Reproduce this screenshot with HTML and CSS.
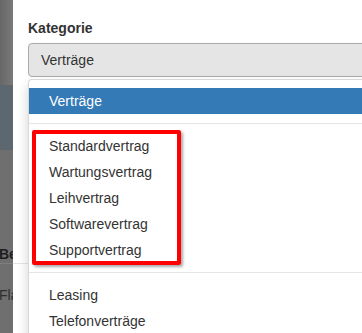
FILE: index.html
```html
<!DOCTYPE html>
<html lang="de">
<head>
    <meta charset="UTF-8">
    <meta name="viewport" content="width=device-width, initial-scale=1.0">
    <title>Kategorie</title>
    <link rel="stylesheet" href="styles.css">
</head>
<body>
    <div class="page">
        <!-- page behind the modal backdrop -->
        <div class="behind">
            <div class="behind-top"></div>
            <div class="behind-nav"></div>
            <div class="behind-body">
                <div class="behind-label">Be</div>
                <div class="behind-input">Fla</div>
            </div>
        </div>

        <div class="modal">
            <label class="field-label">Kategorie</label>
            <div class="select-wrap">
                <div class="select-box">Verträge</div>

                <ul class="dropdown-menu">
                    <li class="item active">Verträge</li>
                    <li class="divider"></li>
                    <li class="group">
                        <ul>
                            <li class="item">Standardvertrag</li>
                            <li class="item">Wartungsvertrag</li>
                            <li class="item">Leihvertrag</li>
                            <li class="item">Softwarevertrag</li>
                            <li class="item">Supportvertrag</li>
                        </ul>
                    </li>
                    <li class="divider"></li>
                    <li class="item">Leasing</li>
                    <li class="item">Telefonverträge</li>
                </ul>
            </div>
            <div class="field-sep"></div>
        </div>
    </div>
</body>
</html>
```

FILE: styles.css
```css
html, body {
    margin: 0;
    padding: 0;
    overflow: hidden;
}

body {
    font-family: "Liberation Sans", Arial, sans-serif;
    font-size: 14px;
    line-height: 20px;
    color: #333;
    width: 362px;
    height: 333px;
}

.page {
    display: flex;
    height: 333px;
}

.behind {
    width: 13px;
    flex-shrink: 0;
    overflow: hidden;
    display: flex;
    flex-direction: column;
}

.behind-top {
    height: 85px;
    background: linear-gradient(to right, #666, #7a7a7a);
}

.behind-nav {
    height: 65px;
    background-color: #5d6770;
}

.behind-body {
    flex: 1;
    background-color: #6f6f6f;
    white-space: nowrap;
}

.behind-label {
    margin-top: 95px;
    margin-left: -1px;
    line-height: 18px;
    font-weight: bold;
    color: #1e1e1e;
    border-bottom: 1px solid #7e7e7e;
}

.behind-input {
    margin-top: 21px;
    margin-left: -1px;
    color: #2e2e2e;
}

.modal {
    flex: 1;
    background-color: #fff;
    padding: 18px 0 0 15px;
    position: relative;
}

.field-label {
    display: block;
    font-weight: bold;
    margin-bottom: 5px;
}

.select-wrap {
    position: relative;
    width: 400px;
}

.select-box {
    height: 34px;
    box-sizing: border-box;
    padding: 6px 12px;
    background-color: #e5e5e5;
    border: 1px solid #aaa;
    border-radius: 4px 0 0 4px;
}

.field-sep {
    margin-top: 186px;
    margin-left: -15px;
    border-top: 1px solid #e5e5e5;
}

.dropdown-menu {
    position: absolute;
    top: 36px;
    left: 0;
    right: 0;
    z-index: 10;
    list-style: none;
    margin: 0;
    padding: 8px 0 5px;
    background-color: #fff;
    border: 1px solid #d9d9d9;
    border-right: none;
    border-radius: 4px 0 0 0;
    box-shadow: 0 6px 12px rgba(0, 0, 0, 0.175);
}

.dropdown-menu ul {
    list-style: none;
    margin: 0;
    padding: 0;
}

.item {
    padding: 3px 20px;
    white-space: nowrap;
    color: #333;
}

.item.active {
    background-color: #337ab7;
    color: #fff;
}

.divider {
    height: 1px;
    margin: 9px 0;
    background-color: #e5e5e5;
}

.group {
    position: relative;
}

/* annotation frame around the contract types */
.group::after {
    content: "";
    position: absolute;
    left: 3px;
    top: -3px;
    bottom: -2px;
    width: 149px;
    box-sizing: border-box;
    border: 4px solid #ff0000;
    border-radius: 2px;
    box-shadow: 2px 2px 3px rgba(0, 0, 0, 0.35);
}
```
